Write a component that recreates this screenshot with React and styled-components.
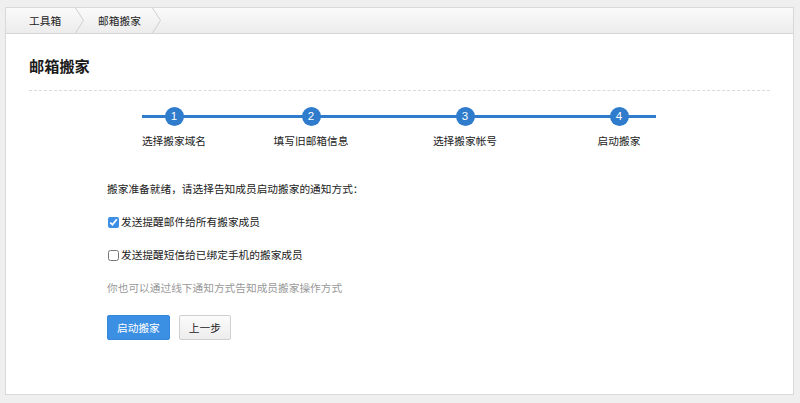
import React from "react";
import styled, { createGlobalStyle } from "styled-components";

const Global = createGlobalStyle`
  html, body { margin: 0; padding: 0; background: #efefef; }
  body { font-family: "Helvetica Neue", "Liberation Sans", "Noto Sans CJK SC", sans-serif; font-size: 10.7px; color: #222; }
`;

const Page = styled.div`
  padding: 7px 6px 8px 5px;
  height: 403px;
  box-sizing: border-box;
`;

const Panel = styled.div`
  background: #fff;
  border: 1px solid #d9d9d9;
  height: 100%;
  box-sizing: border-box;
`;

const Crumbs = styled.div`
  height: 25px;
  display: flex;
  align-items: center;
  background: linear-gradient(#fafafa, #ececec);
  border-bottom: 1px solid #d6d6d6;
  padding-left: 23px;
`;

const Crumb = styled.span`
  font-size: 10.7px;
  color: #222;
  padding-right: ${p => p.$pr}px;
`;

const Chevron = styled.svg`
  width: 9px;
  height: 25px;
  margin-right: ${p => p.$mr}px;
  flex: none;
`;

const Body = styled.div`
  padding: 22px 23px 0 23px;
`;

const Title = styled.h1`
  margin: 0;
  font-size: 15.2px;
  font-weight: bold;
  color: #1a1a1a;
  line-height: 22px;
  padding-bottom: 12px;
  border-bottom: 1px dashed #dadada;
`;

const Steps = styled.div`
  position: relative;
  margin: 14px 0 0 78px;
  width: 582px;
  display: grid;
  grid-template-columns: 134px 140px 168px 140px;
  &::before {
    content: "";
    position: absolute;
    left: 35px;
    width: 514px;
    top: 10px;
    height: 3px;
    background: #2f7bcc;
  }
`;

const Step = styled.div`
  display: flex;
  flex-direction: column;
  align-items: center;
  position: relative;
`;

const Dot = styled.div`
  width: 19px;
  height: 19px;
  border-radius: 50%;
  background: #2f7bcc;
  color: #fff;
  font-size: 11.5px;
  line-height: 19px;
  text-align: center;
  margin-top: 2px;
  font-family: "Liberation Sans", sans-serif;
`;

const StepLabel = styled.div`
  margin-top: 7px;
  font-size: 10.7px;
  color: #222;
  line-height: 16px;
`;

const Content = styled.div`
  margin-left: 78px;
  margin-top: 32px;
`;

const Lead = styled.p`
  margin: 0;
  line-height: 16px;
  color: #222;
`;

const Check = styled.label`
  display: flex;
  align-items: center;
  margin-top: 17px;
  line-height: 16px;
  color: #222;
  input {
    margin: 0 2px 0 1px;
    width: 11px;
    height: 11px;
    accent-color: #3d8ee5;
  }
`;

const Hint = styled.p`
  margin: 17px 0 0;
  line-height: 16px;
  color: #999;
`;

const Buttons = styled.div`
  display: flex;
  gap: 9px;
  margin-top: 19px;
`;

const Button = styled.button`
  height: 25px;
  padding: 0 9px;
  min-width: ${p => (p.$primary ? 62 : 51)}px;
  font-family: inherit;
  font-size: 10.7px;
  border-radius: 2px;
  border: 1px solid ${p => (p.$primary ? "#3486db" : "#cfcfcf")};
  background: ${p => (p.$primary ? "#3b90e3" : "linear-gradient(#fbfbfb, #ededed)")};
  color: ${p => (p.$primary ? "#fff" : "#222")};
  cursor: pointer;
`;

const ChevronIcon = ({ mr }) => (
  <Chevron $mr={mr} viewBox="0 0 9 25">
    <path d="M0.5 0 L8.5 12.5 L0.5 25" fill="none" stroke="#cfcfcf" strokeWidth="1" />
  </Chevron>
);

const steps = [
  ["1", "选择搬家域名"],
  ["2", "填写旧邮箱信息"],
  ["3", "选择搬家帐号"],
  ["4", "启动搬家"],
];

export default function App() {
  return (
    <>
      <Global />
      <Page>
        <Panel>
          <Crumbs>
            <Crumb $pr={14}>工具箱</Crumb>
            <ChevronIcon mr={14} />
            <Crumb $pr={11}>邮箱搬家</Crumb>
            <ChevronIcon mr={0} />
          </Crumbs>
          <Body>
            <Title>邮箱搬家</Title>
            <Steps>
              {steps.map(([n, t]) => (
                <Step key={n}>
                  <Dot>{n}</Dot>
                  <StepLabel>{t}</StepLabel>
                </Step>
              ))}
            </Steps>
            <Content>
              <Lead>搬家准备就绪，请选择告知成员启动搬家的通知方式：</Lead>
              <Check>
                <input type="checkbox" defaultChecked />
                发送提醒邮件给所有搬家成员
              </Check>
              <Check>
                <input type="checkbox" />
                发送提醒短信给已绑定手机的搬家成员
              </Check>
              <Hint>你也可以通过线下通知方式告知成员搬家操作方式</Hint>
              <Buttons>
                <Button $primary>启动搬家</Button>
                <Button>上一步</Button>
              </Buttons>
            </Content>
          </Body>
        </Panel>
      </Page>
    </>
  );
}
